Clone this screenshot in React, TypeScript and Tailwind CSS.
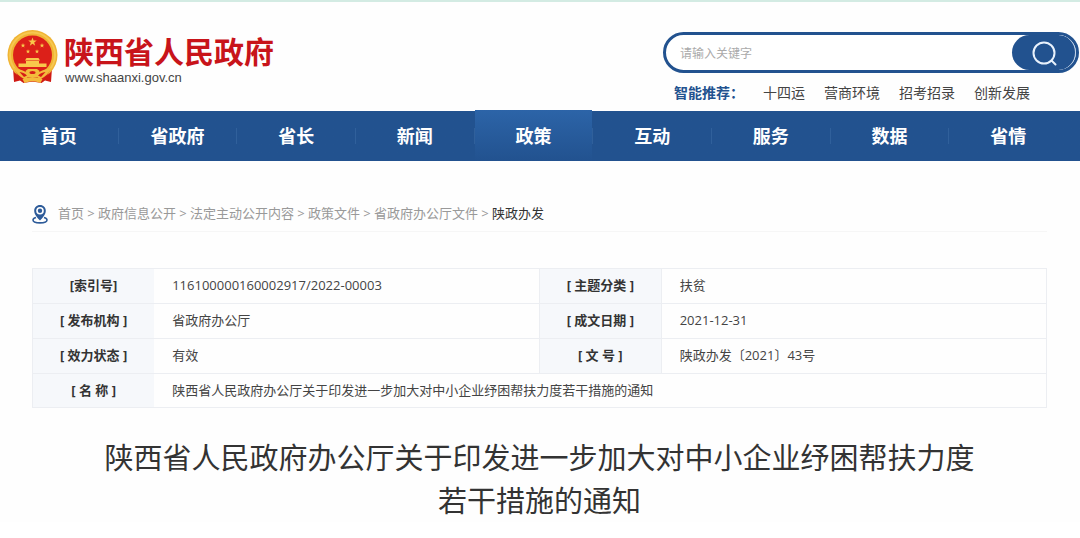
import React from "react";

const NAV = ["首页", "省政府", "省长", "新闻", "政策", "互动", "服务", "数据", "省情"];
const ACTIVE_NAV = "政策";

const HOT_LINKS = ["十四运", "营商环境", "招考招录", "创新发展"];

const CRUMBS = ["首页", "政府信息公开", "法定主动公开内容", "政策文件", "省政府办公厅文件"];

const ROWS = [
  ["[索引号]", "116100000160002917/2022-00003", "[ 主题分类 ]", "扶贫"],
  ["[ 发布机构 ]", "省政府办公厅", "[ 成文日期 ]", "2021-12-31"],
  ["[ 效力状态 ]", "有效", "[ 文 号 ]", "陕政办发〔2021〕43号"],
];

const STAR = "M0 -10 L2.4 -3.2 L9.5 -3.1 L3.8 1.2 L5.9 8.1 L0 4 L-5.9 8.1 L-3.8 1.2 L-9.5 -3.1 L-2.4 -3.2 Z";

function Emblem() {
  return (
    <svg viewBox="0 0 102 108" className="w-[51px] h-[54px] shrink-0" aria-hidden="true">
      {/* Ribbon */}
      <path d="M12 76 L14 104 L26 101 L33 106 L51 103 L69 106 L76 101 L88 104 L90 76 Z" fill="#cf1a14" />
      {/* Wreath */}
      <circle cx="51" cy="50" r="50" fill="#f0b434" />
      <circle cx="51" cy="50" r="45" fill="none" stroke="#f6c750" strokeWidth="4" />
      <circle cx="51" cy="50" r="39" fill="#dc2019" />
      {/* Stars */}
      <g fill="#f9c84b">
        <path d={STAR} transform="translate(51 24) scale(0.9)" />
        <path d={STAR} transform="translate(32 31) scale(0.5)" />
        <path d={STAR} transform="translate(70 31) scale(0.5)" />
        <path d={STAR} transform="translate(42 43) scale(0.45)" />
        <path d={STAR} transform="translate(60 43) scale(0.45)" />
      </g>
      {/* Gate */}
      <path d="M39 56 H63 L66 61 H36 Z M38 62 H64 V67 H79 V74 H23 V67 H38 Z" fill="#f9c84b" />
      {/* Lower drapery and gear */}
      <path d="M16 80 H86 L80 92 L68 103 H34 L22 92 Z" fill="#d61d17" />
      <path d="M13 76 Q34 79 46 90 L36 99 Q20 91 13 76 Z M89 76 Q68 79 56 90 L66 99 Q82 91 89 76 Z" fill="#f3bb3c" />
      <path d="M25 84 Q35 85 40 91 L34 94 Z M77 84 Q67 85 62 91 L68 94 Z" fill="#d61d17" />
      <path d="M37 82 L42 78 H60 L65 82 L61 94 H41 Z" fill="#f3bb3c" />
      <ellipse cx="51" cy="85" rx="6" ry="3" fill="#d61d17" />
      <path d="M31 98 Q51 90 71 98 L67 106 Q51 99 35 106 Z" fill="#f3bb3c" />
    </svg>
  );
}

function PinIcon() {
  return (
    <svg viewBox="0 0 16 20" className="w-4 h-5 shrink-0" fill="none" aria-hidden="true">
      <path d="M4 13.6 C2 14.2 1 15.1 1 16.1 C1 17.8 4 18.9 8 18.9 C12 18.9 15 17.8 15 16.1 C15 15.1 14 14.2 12 13.6" stroke="#2d5b99" strokeWidth="1.6" />
      <path d="M8 1 C4.6 1 2.2 3.5 2.2 6.7 C2.2 10.5 5.4 13.8 8 16.6 C10.6 13.8 13.8 10.5 13.8 6.7 C13.8 3.5 11.4 1 8 1 Z" fill="#2d5b99" />
      <circle cx="8" cy="6.7" r="3.8" fill="#fff" />
      <circle cx="8" cy="6.7" r="2.2" fill="#2d5b99" />
    </svg>
  );
}

function Header() {
  return (
    <header className="flex h-[110px] justify-between border-t-2 border-[#d3ebe3]">
      <div className="flex items-start gap-[6px] pl-[7px] pt-7">
        <Emblem />
        <div className="pt-1">
          <div className="text-[30px] leading-9 font-bold text-[#c8141a]">陕西省人民政府</div>
          <div className="pl-px font-['Liberation_Sans'] text-[13px] leading-4 text-[#444]">www.shaanxi.gov.cn</div>
        </div>
      </div>

      <div className="w-[417px] pt-[30px]">
        <form className="mr-px flex h-[41px] overflow-hidden rounded-full border-3 border-[#22528f] bg-white" onSubmit={(e) => e.preventDefault()}>
          <input
            type="text"
            aria-label="搜索"
            placeholder="请输入关键字"
            className="min-w-0 flex-1 bg-transparent pt-0.5 pl-[14px] text-xs outline-none placeholder:text-[#aaa]"
          />
          <button type="submit" aria-label="搜索" className="flex w-16 items-center justify-center rounded-full border-r border-[#c6d6ea] bg-[#22528f]">
            <svg viewBox="0 0 26 26" className="h-[26px] w-[26px]" fill="none" stroke="#e8f1fc" strokeWidth="2" strokeLinecap="round" aria-hidden="true">
              <circle cx="13" cy="13" r="10.5" />
              <path d="M20.5 20.5 L24.5 24.5" />
            </svg>
          </button>
        </form>
        <div className="flex items-center gap-[19px] pt-2 pl-[11px] text-sm leading-6 text-[#444]">
          <span className="font-bold text-[#22528f]">智能推荐：</span>
          {HOT_LINKS.map((link) => (
            <a key={link} href="#">{link}</a>
          ))}
        </div>
      </div>
    </header>
  );
}

function Nav() {
  return (
    <nav className="bg-linear-to-b from-white from-2% to-[#22528f] to-2%">
      <ul className="flex pr-3">
        {NAV.map((item) => (
          <li key={item} className="group flex flex-1 items-center">
            <a
              href="#"
              className={
                item === ACTIVE_NAV
                  ? "flex-1 bg-linear-to-b from-[#2c64a8] to-[#22528f] pt-0.5 text-center text-lg leading-[49px] font-bold text-white"
                  : "flex-1 pt-0.5 text-center text-lg leading-[49px] font-bold text-white"
              }
            >
              {item}
            </a>
            <span className="h-4 w-px bg-[#30609b] group-last:bg-transparent" />
          </li>
        ))}
      </ul>
    </nav>
  );
}

function Breadcrumb() {
  return (
    <div className="flex h-[35px] items-center gap-[10px] border-b border-[#f6f6f6] text-[13px] text-[#999]">
      <PinIcon />
      <div className="flex">
        {CRUMBS.map((crumb) => (
          <React.Fragment key={crumb}>
            <a href="#">{crumb}</a>
            <span className="w-[14px] text-center">&gt;</span>
          </React.Fragment>
        ))}
        <a href="#" className="text-[#333]">陕政办发</a>
      </div>
    </div>
  );
}

function InfoTable() {
  const label = "w-[12%] border-y border-[#eceef2] bg-[#f6f8fb] pb-0.5 text-center font-bold text-[#333]";
  const value = "w-[38%] border-y border-[#eceef2] pb-0.5 pl-[18px] text-[#444]";
  return (
    <table className="mt-9 w-full table-fixed border-collapse border border-[#eceef2] text-[13px] leading-5">
      <tbody>
        {ROWS.map((row) => (
          <tr key={row[0]} className="h-[35px]">
            <th scope="row" className={label}>{row[0]}</th>
            <td className={value}>{row[1]}</td>
            <th scope="row" className={`${label} border-x`}>{row[2]}</th>
            <td className={value}>{row[3]}</td>
          </tr>
        ))}
        <tr className="h-[34px]">
          <th scope="row" className={label}>[ 名 称 ]</th>
          <td colSpan={3} className={value}>
            陕西省人民政府办公厅关于印发进一步加大对中小企业纾困帮扶力度若干措施的通知
          </td>
        </tr>
      </tbody>
    </table>
  );
}

export default function App() {
  return (
    <div className="bg-[#fefefe] font-['Open_Sans','Noto_Sans_CJK_SC',sans-serif]">
      <Header />
      <Nav />
      <main className="pt-9 pr-[33px] pl-8">
        <Breadcrumb />
        <InfoTable />
        <h1 className="mt-7 text-center text-[29px] leading-[43px] font-normal text-[#333]">
          陕西省人民政府办公厅关于印发进一步加大对中小企业纾困帮扶力度
          <br />
          若干措施的通知
        </h1>
      </main>
    </div>
  );
}
